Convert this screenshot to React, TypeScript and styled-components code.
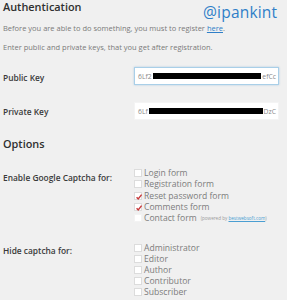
import * as React from "react"
import styled, { createGlobalStyle } from "styled-components"

const GlobalStyle = createGlobalStyle`
  html, body {
    margin: 0;
    padding: 0;
    background: #f0f0f0;
  }
  body {
    font-family: "Open Sans", "Noto Sans", sans-serif;
    overflow: hidden;
  }
`

const Page = styled.main`
  position: relative;
  width: 287px;
  height: 300px;
  padding: 0 0 0 3px;
  box-sizing: border-box;
  color: #333;
`

const Watermark = styled.div`
  position: absolute;
  top: 1px;
  left: 203px;
  font-size: 15.5px;
  color: #2f7fc8;
  letter-spacing: 0.2px;
`

const Heading = styled.h2<{ $top?: number }>`
  margin: ${p => p.$top ?? 0}px 0 0;
  font-size: 10.9px;
  font-weight: 600;
  color: #2f2f2f;
  line-height: 14px;
`

const Note = styled.p`
  margin: 9px 0 0;
  font-size: 7.5px;
  line-height: 10px;
  color: #7a7a7a;
`

const Link = styled.a`
  color: #2f7fc8;
  text-decoration: underline;
`

const Row = styled.div<{ $top: number }>`
  display: grid;
  grid-template-columns: 131px 145px;
  align-items: start;
  margin-top: ${p => p.$top}px;
`

const Label = styled.div<{ $pad: number }>`
  font-size: 8.4px;
  font-weight: 600;
  color: #3a3a3a;
  padding-top: ${p => p.$pad}px;
  line-height: 11px;
`

const KeyBox = styled.div<{ $focus?: boolean }>`
  display: flex;
  align-items: center;
  height: 18px;
  padding: 0 2px 0 3px;
  box-sizing: border-box;
  background: #fff;
  border: 1px solid ${p => (p.$focus ? "#a9cfe8" : "#f4f4f4")};
  box-shadow: ${p => (p.$focus ? "0 0 2px rgba(60,140,200,0.35)" : "none")};
  font-size: 6.8px;
  color: #8a8a8a;
`

const Redact = styled.span`
  flex: 1;
  height: 6px;
  background: #000;
  margin: 0 1px;
`

const Checks = styled.div<{ $gap: number }>`
  display: flex;
  flex-direction: column;
  gap: ${p => p.$gap}px;
`

const CheckRow = styled.div`
  display: flex;
  align-items: center;
  gap: 2px;
  height: 9px;
  font-size: 8.6px;
  color: #7c7c7c;
  white-space: nowrap;
`

const Box = styled.span<{ $faint?: boolean }>`
  position: relative;
  width: 8px;
  height: 8px;
  flex: none;
  background: #fff;
  border: 1px solid ${p => (p.$faint ? "#f3f3f3" : "#dcdcdc")};
  box-sizing: border-box;
`

const Tick = styled.svg`
  position: absolute;
  left: 0;
  top: 0;
`

const Small = styled.span`
  font-size: 4.6px;
  color: #9a9a9a;
  margin-left: 2px;
`

const SmallLink = styled.span`
  color: #4a9ed2;
  text-decoration: underline;
`

type Item = { label: string; checked?: boolean; faint?: boolean; extra?: boolean }

const captchaItems: Item[] = [
  { label: "Login form" },
  { label: "Registration form" },
  { label: "Reset password form", checked: true },
  { label: "Comments form", checked: true },
  { label: "Contact form", faint: true, extra: true },
]

const roleItems: Item[] = [
  { label: "Administrator" },
  { label: "Editor" },
  { label: "Author" },
  { label: "Contributor" },
  { label: "Subscriber" },
]

const CheckList = ({ items, gap }: { items: Item[]; gap: number }) => (
  <Checks $gap={gap}>
    {items.map(it => (
      <CheckRow key={it.label}>
        <Box $faint={it.faint}>
          {it.checked && (
            <Tick width="8" height="8" viewBox="0 0 8 8">
              <path d="M1.6 4.3 L3.2 6 L6.6 1.6" fill="none" stroke="#c8383a" strokeWidth="1.4" />
            </Tick>
          )}
        </Box>
        {it.label}
        {it.extra && (
          <Small>
            (powered by <SmallLink>bestwebsoft.com</SmallLink>)
          </Small>
        )}
      </CheckRow>
    ))}
  </Checks>
)

const App = () => (
  <Page>
    <GlobalStyle />
    <Watermark>@ipankint</Watermark>
    <Heading>Authentication</Heading>
    <Note>
      Before you are able to do something, you must to register <Link>here</Link>.
    </Note>
    <Note>Enter public and private keys, that you get after registration.</Note>

    <Row $top={15}>
      <Label $pad={4.5}>Public Key</Label>
      <KeyBox $focus>
        6Lf2<Redact />efCc
      </KeyBox>
    </Row>
    <Row $top={17}>
      <Label $pad={3.5}>Private Key</Label>
      <KeyBox>
        6Lf<Redact />DzC
      </KeyBox>
    </Row>

    <Heading $top={17}>Options</Heading>

    <Row $top={17.5}>
      <Label $pad={3}>Enable Google Captcha for:</Label>
      <CheckList items={captchaItems} gap={2.25} />
    </Row>
    <Row $top={21}>
      <Label $pad={1}>Hide captcha for:</Label>
      <CheckList items={roleItems} gap={2} />
    </Row>
  </Page>
)

export default App
